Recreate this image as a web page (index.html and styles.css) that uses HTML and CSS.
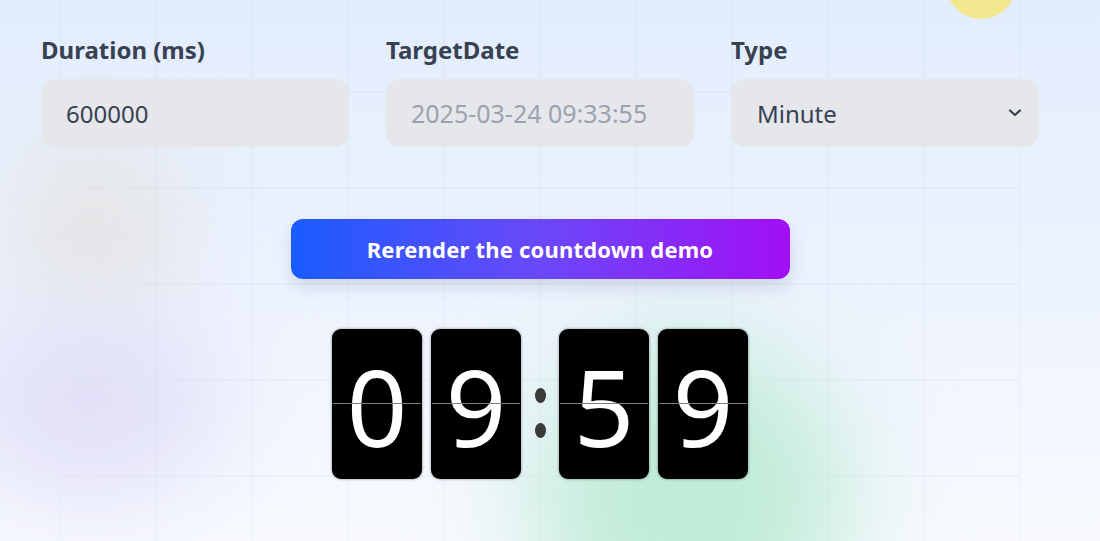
FILE: index.html
```html
<!DOCTYPE html>
<html lang="en">
<head>
<meta charset="utf-8">
<title>Countdown demo</title>
<link rel="stylesheet" href="styles.css">
</head>
<body>
<div class="backdrop" aria-hidden="true">
  <div class="grid"></div>
  <div class="blob blob-beige"></div>
  <div class="blob blob-purple"></div>
  <div class="blob blob-green"></div>
  <div class="sun"></div>
</div>
<main class="page">
  <section class="form">
    <div class="field">
      <label class="label" for="duration">Duration (ms)</label>
      <input class="control" id="duration" type="text" value="600000">
    </div>
    <div class="field">
      <label class="label" for="target">TargetDate</label>
      <input class="control control-date" id="target" type="text" placeholder="2025-03-24 09:33:55">
    </div>
    <div class="field">
      <label class="label" for="type">Type</label>
      <div class="select-wrap">
        <select class="control control-select" id="type">
          <option>Minute</option>
          <option>Second</option>
          <option>Hour</option>
        </select>
        <svg class="chevron" width="14" height="8" viewBox="0 0 14 8"><path d="M2 1.5 L7 6 L12 1.5" fill="none" stroke="#374151" stroke-width="2.2" stroke-linecap="round" stroke-linejoin="round"/></svg>
      </div>
    </div>
  </section>
  <div class="actions">
    <button class="btn" type="button">Rerender the countdown demo</button>
  </div>
  <div class="clock">
    <div class="card"><span class="digit">0</span></div>
    <div class="card"><span class="digit">9</span></div>
    <div class="colon"><span class="dot"></span><span class="dot"></span></div>
    <div class="card"><span class="digit">5</span></div>
    <div class="card"><span class="digit">9</span></div>
  </div>
</main>
</body>
</html>
```

FILE: styles.css
```css
* { box-sizing: border-box; }

html, body {
  margin: 0;
  height: 100%;
}

body {
  position: relative;
  overflow: hidden;
  background: linear-gradient(180deg, #e2edfc 0%, #ebf2fe 45%, #f8faff 100%);
  font-family: "Noto Sans", "DejaVu Sans", sans-serif;
  color: #374151;
}

.backdrop {
  position: absolute;
  inset: 0;
  overflow: hidden;
  z-index: 0;
}

.grid {
  position: absolute;
  left: 60px;
  top: -4px;
  width: 960px;
  height: 600px;
  background-image:
    linear-gradient(to right, rgba(120, 140, 170, 0.055) 2px, transparent 2px),
    linear-gradient(to bottom, rgba(120, 140, 170, 0.055) 2px, transparent 2px);
  background-size: 96px 96px;
  background-position: -1px -1px;
}

.blob {
  position: absolute;
  border-radius: 50%;
}

.blob-beige {
  left: 10px;
  top: 140px;
  width: 170px;
  height: 170px;
  background: rgba(226, 222, 214, 0.6);
  filter: blur(45px);
}

.blob-purple {
  left: -40px;
  top: 310px;
  width: 260px;
  height: 190px;
  background: rgba(220, 216, 246, 0.75);
  filter: blur(50px);
}

.blob-green {
  left: 530px;
  top: 340px;
  width: 320px;
  height: 320px;
  background: rgba(186, 234, 212, 0.9);
  filter: blur(55px);
}

.sun {
  position: absolute;
  left: 946px;
  top: -51px;
  width: 70px;
  height: 70px;
  border-radius: 50%;
  background: #f3e78f;
}

.page {
  position: relative;
  z-index: 1;
  width: 998px;
  margin-left: 41px;
  padding-top: 34px;
}

.form {
  display: grid;
  grid-template-columns: repeat(3, 308px);
  column-gap: 37px;
}

.field {
  display: flex;
  flex-direction: column;
}

.label {
  font-size: 24px;
  line-height: 32px;
  font-weight: 700;
  color: #374151;
  margin-bottom: 13px;
}

.control {
  width: 100%;
  height: 68px;
  border: none;
  border-radius: 14px;
  background: #e5e7eb;
  padding: 0 25px;
  font-family: "Noto Sans", "DejaVu Sans", sans-serif;
  font-size: 24px;
  color: #374151;
  outline: none;
}

.control-date::placeholder {
  color: #9ca3af;
  font-size: 25px;
  opacity: 1;
}

.select-wrap {
  position: relative;
}

.control-select {
  appearance: none;
  -webkit-appearance: none;
  padding-left: 26px;
}

.chevron {
  position: absolute;
  right: 17px;
  top: 30px;
  pointer-events: none;
}

.actions {
  display: flex;
  justify-content: center;
  margin-top: 72px;
}

.btn {
  width: 499px;
  height: 60px;
  border: none;
  border-radius: 12px;
  background: linear-gradient(90deg, #1a5cff 0%, #6a48f8 50%, #a20ff6 100%);
  box-shadow: 0 8px 16px rgba(60, 70, 110, 0.16);
  color: #ffffff;
  font-family: "Noto Sans", "DejaVu Sans", sans-serif;
  font-size: 22px;
  font-weight: 700;
  letter-spacing: 0.2px;
}

.clock {
  display: flex;
  justify-content: center;
  gap: 9px;
  margin-top: 50px;
}

.card {
  position: relative;
  width: 90px;
  height: 150px;
  border-radius: 9px;
  background: #000000;
  box-shadow: 0 0 3px rgba(0, 0, 0, 0.45);
  display: flex;
  align-items: center;
  justify-content: center;
}

.card::after {
  content: "";
  position: absolute;
  left: 1px;
  right: 1px;
  top: 74px;
  height: 1px;
  background: #7c7c7c;
}

.digit {
  font-family: "Noto Sans", "DejaVu Sans", sans-serif;
  font-size: 106px;
  line-height: 1;
  color: #ffffff;
  margin-top: 4px;
}

.colon {
  width: 20px;
  display: flex;
  flex-direction: column;
  align-items: center;
  justify-content: center;
  gap: 20px;
  padding-top: 17px;
}

.dot {
  width: 11px;
  height: 15px;
  border-radius: 50%;
  background: #3a3a3a;
}
```
